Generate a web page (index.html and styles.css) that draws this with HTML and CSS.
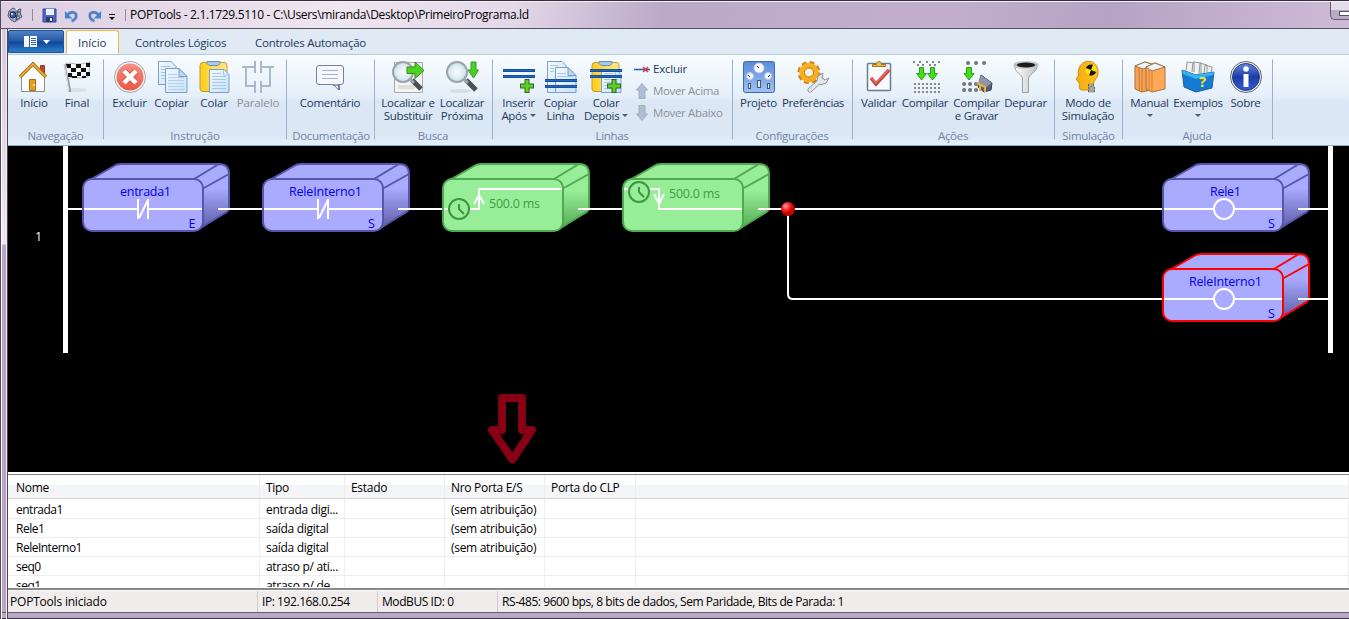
FILE: index.html
```html
<!DOCTYPE html>
<html lang="pt-BR">
<head>
<meta charset="utf-8">
<title>POPTools</title>
<link rel="stylesheet" href="styles.css">
</head>
<body>
<div class="window">
  <header class="titlebar">
    <svg class="app-icon" viewBox="0 0 18 18"><circle cx="9" cy="9" r="6.500" fill="#8790ad"/><path d="M3 5 7 2l3 2 5-1-1 4 2 4-5 2-2 3-4-2-3-4z" fill="#a9b0c6" stroke="#555d78"/><path d="M4 6h10M5 10h9M12 4l-2 10" stroke="#3b4568"/><circle cx="7" cy="9" r="3" fill="#3f5fae" stroke="#142449"/><circle cx="6" cy="8" r="1" fill="#fff"/><path d="M9 4l2-2 1 2z" fill="#fff"/></svg>
    <span class="title-sep"></span>
    <svg class="save" viewBox="0 0 16 16"><path d="M1 1h13v13H1z" fill="#5466c5" stroke="#3242a3"/><path d="M4 1h8v6H4z" fill="#e7f3ff"/><path d="M4 9h7v5H4z" fill="#293d61"/><path d="M8 10h2v3H8z" fill="#dce9f6"/></svg>
    <svg class="undo" viewBox="0 0 16 16"><path d="M4 6c3-4 9-3 9 1 0 3-2 5-5 6" fill="none" stroke="#4f84cb" stroke-width="3"/><path d="M1 2v8h8z" fill="#4584d1"/></svg>
    <svg class="redo" viewBox="0 0 16 16"><path d="M12 6C9 2 3 3 3 7c0 3 2 5 5 6" fill="none" stroke="#4f84cb" stroke-width="3"/><path d="M15 2v8H7z" fill="#4584d1"/></svg>
    <svg class="customize" viewBox="0 0 8 8"><path d="M1 .5h6" stroke="#111"/><path d="M1 3h6L4 6z" fill="#111"/></svg>
    <span class="title-sep second"></span>
    <span class="title">POPTools - 2.1.1729.5110 - C:\Users\miranda\Desktop\PrimeiroPrograma.ld</span>
    <span class="minimize"><i></i></span>
  </header>
  <nav class="tabs">
    <div class="file-tab"><svg viewBox="0 0 28 14"><path d="M1 1h13v11H1z" fill="#f8fbff"/><path d="M6.500 1v11" stroke="#315ea7"/><path d="M8 3.500h5M8 5.500h5M8 7.500h5M8 9.500h5" stroke="#315ea7"/><path d="M20 5h7l-3.500 4z" fill="#fff"/></svg></div>
    <div class="tab active">Início</div>
    <div class="tab logic">Controles Lógicos</div>
    <div class="tab automation">Controles Automação</div>
  </nav>
  <section class="ribbon">
    <div class="group nav"><div class="tools">
      <div class="tool w40"><svg viewBox="0 0 32 32"><path d="M22.500 4.500h4v9h-4z" fill="#c94529" stroke="#8d3b2b"/><path d="M3.500 15 15 4l11.500 11v15.500h-23z" fill="#fbfcfd" stroke="#8a9098"/><path d="M2 16 15 3l13 13" fill="none" stroke="#a9701a" stroke-width="3.500"/><path d="M2 16 15 3l13 13" fill="none" stroke="#f2b631" stroke-width="1.500"/><path d="M11.500 18.500h6v11h-6z" fill="#e6a319" stroke="#ac6c12"/><circle cx="16" cy="24" r="1" fill="#fff"/></svg><span>Início</span></div>
      <div class="tool w46"><svg viewBox="0 0 32 32"><ellipse cx="16" cy="29" rx="10" ry="2" fill="#c9cfd6" opacity=".5"/><path d="M4 3 9 31" stroke="#8c949c" stroke-width="2.500"/><path d="M3.500 3 8 30" stroke="#e6eaee"/><path d="M4 3c7-3 9 3 25-2l-1 14c-8 5-15-2-21 3z" fill="#f7f7f7" stroke="#777" stroke-width=".5"/><path d="M5 3h5v4H6zm10 0h5v4h-5zm10-1h4v4h-4zM10 7h5v4h-5zm10 0h5v4h-5zM7 12h4v4H7zm9-1h4v4h-4zm9 0h4v4h-4zm-14 4h5v2h-5zm10 0h4v2h-4z" fill="#111"/></svg><span>Final</span></div>
    </div><div class="caption">Navegação</div></div>

    <div class="group instruction"><div class="tools">
      <div class="tool w41"><svg viewBox="0 0 32 32"><circle cx="16" cy="16" r="15.500" fill="#f7f8f9" stroke="#a2a5a8"/><circle cx="16" cy="16" r="13.500" fill="url(#red)"/><path d="m10 10 12 12M22 10 10 22" stroke="#d45a4b" stroke-width="6.500"/><path d="m10 10 12 12M22 10 10 22" stroke="#fff" stroke-width="4.500"/></svg><span>Excluir</span></div>
      <div class="tool w43"><svg viewBox="0 0 32 32"><path d="M2.500.5H15l5 5v18H2.500z" fill="url(#paper)" stroke="#7c9fc8"/><path d="M5 5.500h9M5 8.500h5M5 11.500h4M5 14.500h4M5 17.500h4" stroke="#a9c8e7"/><path d="M9.500 7.500H23l8 8v16H9.500z" fill="url(#paper)" stroke="#7c9fc8"/><path d="M23 7.500v8h8z" fill="#bdd9f5" stroke="#7c9fc8"/><path d="M12 13.500h9M12 16.500h16M12 19.500h16M12 22.500h16M12 25.500h16M12 28.500h16" stroke="#b5d0ec"/></svg><span>Copiar</span></div>
      <div class="tool w42"><svg viewBox="0 0 32 32"><g id="clipboard"><rect x="2" y="1.500" width="27" height="29" rx="3" fill="url(#yellow)" stroke="#be9b32"/><path d="M9 .5h13v2l-2 2h-9l-2-2z" fill="#a9c9e9" stroke="#6c8fb5"/><path d="M11.500 8.500H26l5 5v18H11.500z" fill="url(#paper)" stroke="#7c9fc8"/><path d="M25.500 9v5H31M14 12.500h9M14 15.500h14M14 18.500h14M14 21.500h14M14 24.500h14M14 27.500h14" fill="none" stroke="#a9c8e7"/></g></svg><span>Colar</span></div>
      <div class="tool w46 disabled"><svg viewBox="0 0 32 32"><path d="M0 6h13M19 6h13M13 0v12M19 0v12M4 7v18h9M28 7v18h-9M13 20v12M19 20v12" fill="none" stroke="#a9b9cb" stroke-width="2"/></svg><span>Paralelo</span></div>
    </div><div class="caption">Instrução</div></div>

    <div class="group documentation"><div class="tools"><div class="tool w80"><svg viewBox="0 0 32 32"><path d="M5 4.500h22q2.500 0 2.500 2.500v14q0 2.500-2.500 2.500h-2V29l-6-5.500H5q-2.500 0-2.500-2.500V7q0-2.500 2.500-2.500z" fill="#f6f8fd" stroke="#7380a5"/><path d="M19 24h6v5" fill="none" stroke="#3f4a69"/><path d="M8 9.500h16M8 13.500h16M8 17.500h16" stroke="#a3b1cb"/></svg><span>Comentário</span></div></div><div class="caption">Documentação</div></div>

    <div class="group search"><div class="tools">
      <div class="tool w58"><svg viewBox="0 0 32 32"><path d="M2.500 1.500h28v30h-28z" fill="#f4f4f4" stroke="#aaa"/><path d="M6 24h17v4H6z" fill="#dedede"/><path d="m20 19 9 9" stroke="#4c4f52" stroke-width="5"/><path d="m17 17 5 5" stroke="#9ba5ad" stroke-width="3"/><circle cx="11" cy="11" r="10" fill="url(#glass)" stroke="#98a3aa" stroke-width="2"/><path d="M15 6h8V1l9 8.500-9 8v-5h-8z" fill="#4cd51e" stroke="#398822"/></svg><span>Localizar e<br>Substituir</span></div>
      <div class="tool w50"><svg viewBox="0 0 32 32"><ellipse cx="14" cy="30" rx="11" ry="2" fill="#b8c4cd" opacity=".4"/><path d="m20 19 10 10" stroke="#4c4f52" stroke-width="5"/><path d="m17 17 5 5" stroke="#9ba5ad" stroke-width="3"/><circle cx="11" cy="11" r="10" fill="url(#glass)" stroke="#98a3aa" stroke-width="2"/><path d="M25 1h5v8h2.500L27.500 17 22 9h3z" fill="#42d51b" stroke="#43953b"/></svg><span>Localizar<br>Próxima</span></div>
    </div><div class="caption">Busca</div></div>

    <div class="group lines"><div class="tools">
      <div class="tool w43"><svg viewBox="0 0 32 32"><path d="M0 9.500h32M0 15.500h32" stroke="#164e9c" stroke-width="3"/><path d="M0 9.500h32M0 15.500h32" stroke="#1f6ac4"/><g id="plus"><path d="M24 18v14M17 25h14" stroke="#2c6a25" stroke-width="5"/><path d="M24 19v12M18 25h12" stroke="#62cf23" stroke-width="3"/></g></svg><span>Inserir<br>Após <i class="drop"></i></span></div>
      <div class="tool w41"><svg viewBox="0 0 32 32"><path d="M2.500.5H17l4 4v27H2.500z" fill="url(#paper)" stroke="#7c9fc8"/><path d="M10.500 6.500H23l8 8v17H10.500z" fill="url(#paper)" stroke="#7c9fc8"/><path d="M23 6.500v8h8z" fill="#bdd9f5" stroke="#7c9fc8"/><path d="M5 4.500h8M5 7.500h4M5 10.500h4M12 12.500h9M12 15.500h16" stroke="#abc9e8"/><path d="M0 19.500h32M0 25.500h32" stroke="#164e9c" stroke-width="3"/><path d="M0 19.500h32M0 25.500h32" stroke="#1f6ac4"/></svg><span>Copiar<br>Linha</span></div>
      <div class="tool w50"><svg viewBox="0 0 32 32"><use href="#clipboard"/><path d="M0 9.500h32M0 15.500h32" stroke="#164e9c" stroke-width="3"/><path d="M0 9.500h32M0 15.500h32" stroke="#1f6ac4"/><use href="#plus"/></svg><span>Colar<br>Depois <i class="drop"></i></span></div>
      <div class="line-actions">
        <div><svg viewBox="0 0 16 16"><path d="M0 8.500h16" stroke="#1b5fa9" stroke-width="1.500"/><path d="m9 6 5 5M14 6 9 11" stroke="#df333e" stroke-width="1.500"/></svg><span>Excluir</span></div>
        <div class="disabled"><svg viewBox="0 0 16 16"><path d="m8 .5 5.500 6.500H11v8.500H5V7H2.500z" fill="#b0bed5" stroke="#9facc2"/></svg><span>Mover Acima</span></div>
        <div class="disabled"><svg viewBox="0 0 16 16"><path d="m8 15.500 5.500-6.500H11V.5H5V9H2.500z" fill="#b0bed5" stroke="#9facc2"/></svg><span>Mover Abaixo</span></div>
      </div>
    </div><div class="caption">Linhas</div></div>

    <div class="group config"><div class="tools">
      <div class="tool w43"><svg viewBox="0 0 32 32"><rect x=".5" y=".5" width="31" height="31" rx="2" fill="url(#project)" stroke="#3f69ae"/><g fill="#f5f7fa" stroke="#bccbe0"><circle cx="16" cy="7" r="5"/><circle cx="7" cy="15" r="3.500"/><circle cx="25" cy="15" r="3.500"/></g><path d="m14 5 2 2M5 14l2 2M27 14l-2 2" stroke="#444"/><g fill="#dbe3e9" stroke="#46586a"><rect x="5.500" y="22.500" width="2" height="5"/><rect x="14.500" y="19.500" width="3" height="7"/><rect x="24.500" y="22.500" width="2" height="5"/></g></svg><span>Projeto</span></div>
      <div class="tool w66"><svg viewBox="0 0 32 32"><circle cx="12" cy="11.500" r="9.500" fill="none" stroke="#d07f12" stroke-width="4" stroke-dasharray="4.500 3"/><circle cx="12" cy="11.500" r="7" fill="none" stroke="#f6b01f" stroke-width="5.500"/><circle cx="12" cy="11.500" r="4.500" fill="#f4f2e4" stroke="#c4740b"/><path d="M13 29 24 19" stroke="#899097" stroke-width="5" stroke-linecap="round"/><path d="m20 20 1-5 5-3-1 5 3 2 4-2-3 5-6 2z" fill="#e4e7e7" stroke="#899097"/><path d="M13 29 24 19" stroke="#e4e7e7" stroke-width="3.500" stroke-linecap="round"/></svg><span>Preferências</span></div>
    </div><div class="caption">Configurações</div></div>

    <div class="group actions"><div class="tools">
      <div class="tool w43"><svg viewBox="0 0 32 32"><rect x="4.500" y="2.500" width="23" height="27" rx="1" fill="#fafbff" stroke="#687c9a" stroke-width="1.500"/><path d="M9.500 5.500v-2h4c0-4 5-4 5 0h4v2z" fill="#edbd4b" stroke="#a57419"/><path d="m8 17 5 6L26 9" fill="none" stroke="#c24739" stroke-width="3.500"/><path d="m8 16.500 5 5.500L26 8.500" fill="none" stroke="#ef6558" stroke-width="1.500"/></svg><span>Validar</span></div>
      <div class="tool w50"><svg viewBox="0 0 32 32"><path d="M4 0h2v2H4zm6 0h2v2h-2zm7 0h2v2h-2zm6 0h2v2h-2zm6 0h2v2h-2zM8 3h2v2H8zm5 0h2v2h-2zm7 0h2v2h-2zm5 0h2v2h-2z" fill="#888"/><path d="M10.500 6.500h4v6h3L12.500 19l-5-6.500h3zM21.500 6.500h4v6h3l-5 6.500-5-6.500h3z" fill="#3ce218" stroke="#399a22"/><path d="M5 23h27M5 27h27M5 31h27" stroke="#888" stroke-width="2" stroke-dasharray="2 2"/></svg><span>Compilar</span></div>
      <div class="tool w53"><svg viewBox="0 0 32 32"><path d="M7 2h.1M15 2h.1M23 2h.1M3 23h.1M9 23h.1M15 23h.1M3 29h.1M9 29h.1M15 29h.1" stroke="#777" stroke-width="4" stroke-linecap="round"/><path d="M5.500 6.500h5v6h2.500L8 19l-5-6.500h2.500z" fill="#3ce218" stroke="#399a22"/><path d="m20 14 11 8-1 7-7 2-6-5z" fill="#596173" stroke="#333c4d"/><path d="m20 14 11 8-6 4-8-3z" fill="#8e95ac"/><path d="m16 22 8 4v5m-5-7v6" fill="none" stroke="#e7b637" stroke-width="2"/></svg><span>Compilar<br>e Gravar</span></div>
      <div class="tool w45"><svg viewBox="0 0 32 32"><path d="M4.500 4c0 8 8 9 8 14v13.500h6V18c0-5 9-7 9-14z" fill="url(#silver)" stroke="#9a9fa2"/><ellipse cx="16" cy="4" rx="12" ry="3" fill="#aaa" stroke="#c6c8c9" stroke-width="1.500"/><ellipse cx="16" cy="4" rx="9" ry="2.500" fill="#1b1c1e"/></svg><span>Depurar</span></div>
    </div><div class="caption">Ações</div></div>

    <div class="group simulation"><div class="tools"><div class="tool w62"><svg viewBox="0 0 32 32"><path d="M6 12C7-4 26-3 26 11c0 7-4 7-5 13q-2 4-5 5h-6c-4 0-2-5-3-7l-3-4 3-4z" fill="url(#head)" stroke="#d09213"/><circle cx="19" cy="9" r="5.500" fill="#ffe000"/><path d="M19 9V3.500A5.500 5.500 0 0 0 13.500 9zm0 0v5.500a5.500 5.500 0 0 0 5.500-5.500z" fill="#121212" transform="rotate(20 19 9)"/><path d="M16 24h6M16 27h7M16 30h7" stroke="#666" stroke-width="2.500"/><path d="M17 24h4M17 27h5M17 30h5" stroke="#ddd"/></svg><span>Modo de<br>Simulação</span></div></div><div class="caption">Simulação</div></div>

    <div class="group help"><div class="tools">
      <div class="tool w45"><svg viewBox="0 0 32 32"><path d="m1 5 10-4 10 3v24L8 31l-7-3z" fill="#f5a252" stroke="#b26d35"/><path d="m1 5 10-4 10 3-12 4z" fill="#eff5f5" stroke="#97764f"/><path d="m12 6 9-4 10 4v22l-13 3-6-3z" fill="#ffa957" stroke="#b26d35"/><path d="m12 6 9-4 10 4-13 4z" fill="#eff5f5" stroke="#97764f"/><path d="m5 7 .5 22M8 9v21M15 9v21M18 10v20" stroke="#cd7b39"/></svg><span>Manual<br><i class="drop"></i></span></div>
      <div class="tool w52"><svg viewBox="0 0 32 32"><path d="m4 10 1-9 7 1v9M10 11l1-10 8 1v11M17 13l1-11 7 2v9M22 13l1-9 7 2-1 7" fill="#eff0ef" stroke="#929a9d"/><path d="m0 9 14 5 18-3-2 16-16 4L2 26z" fill="#147bd3" stroke="#235f98"/><path d="m0 9 14 5 18-3-1 3-17 4L1 13z" fill="#38b2f4"/><text x="17" y="26" class="question">?</text></svg><span>Exemplos<br><i class="drop"></i></span></div>
      <div class="tool w43"><svg viewBox="0 0 32 32"><circle cx="16" cy="16" r="15.500" fill="#f0f1f3" stroke="#62656b"/><circle cx="16" cy="16" r="13.500" fill="url(#info)" stroke="#23398b"/><circle cx="16" cy="8" r="2.800" fill="#fff"/><path d="M13.500 13h5v13h-5z" fill="#fff"/></svg><span>Sobre</span></div>
    </div><div class="caption">Ajuda</div></div>
  </section>

  <main class="canvas">
    <svg class="ladder" viewBox="8 146 1341 326">
      <defs>
        <linearGradient id="red" x2="0" y2="1"><stop stop-color="#f49183"/><stop offset="1" stop-color="#ed5544"/></linearGradient>
        <linearGradient id="paper" x2="1" y2="1"><stop stop-color="#f4faff"/><stop offset="1" stop-color="#c7e0fa"/></linearGradient>
        <linearGradient id="yellow"><stop stop-color="#ffce19"/><stop offset="1" stop-color="#ffe58b"/></linearGradient>
        <linearGradient id="silver"><stop stop-color="#fff"/><stop offset="1" stop-color="#bcc2c8"/></linearGradient>
        <radialGradient id="glass"><stop stop-color="#f9fdff"/><stop offset="1" stop-color="#cfe2ea"/></radialGradient>
        <linearGradient id="project" x2="0" y2="1"><stop stop-color="#5b8bd8"/><stop offset="1" stop-color="#9fc2f6"/></linearGradient>
        <linearGradient id="head"><stop stop-color="#f3a914"/><stop offset="1" stop-color="#ffc51b"/></linearGradient>
        <linearGradient id="info" x2="0" y2="1"><stop stop-color="#6688db"/><stop offset=".5" stop-color="#1c3da6"/><stop offset="1" stop-color="#315ed0"/></linearGradient>
        <linearGradient id="violet-side" x2="0" y2="1"><stop stop-color="#aaaaff"/><stop offset=".25" stop-color="#aaaaff"/><stop offset="1" stop-color="#5959a4"/></linearGradient>
        <linearGradient id="green-side" x2="0" y2="1"><stop stop-color="#98ee98"/><stop offset=".3" stop-color="#98ee98"/><stop offset="1" stop-color="#50a850"/></linearGradient>
        <radialGradient id="node" cx=".35" cy=".3"><stop stop-color="#ff9a9a"/><stop offset=".6" stop-color="#ee2222"/><stop offset="1" stop-color="#c80000"/></radialGradient>
        <g id="block">
          <path class="face" d="M87 182 114 166q3-2 7-2h98q10 0 10 10l-26 15-8-10H91z"/>
          <path class="side" d="M203 188 229 174v33q0 4-4 6l-26 17z"/>
          <path class="edge" d="M88 181 114 166q3-2 7-2h98q10 0 10 10v33q0 4-4 6l-28 17M194 179l25-15M203 188.500l26-14.500"/>
          <rect class="face edge" x="83" y="179" width="120" height="52" rx="9"/>
        </g>
      </defs>
      <path class="rail" d="M65.500 146v207M1330.500 146v207"/>
      <path class="wire" d="M68 209h1260M788 209v85q0 5 5 5h535"/>
      <use href="#block" class="violet"/>
      <use href="#block" class="violet" x="180"/>
      <use href="#block" class="green" x="360"/>
      <use href="#block" class="green" x="540"/>
      <use href="#block" class="violet" x="1080"/>
      <use href="#block" class="violet selected" x="1080" y="90"/>
      <g class="wire">
        <path d="M84 209h54M148 209h54M138 199v20M148 199v20M139 218l9-18M218 209h44"/>
        <path d="M264 209h54M328 209h54M318 199v20M328 199v20M319 218l9-18M398 209h44"/>
        <path d="M444 209h4M470 209h9v-20h83M474 204l5-9 5 9M578 209h44"/>
        <path d="M624 189h4M650 189h9v20h83M654 194l5 10 5-10M758 209h25"/>
        <path d="M1164 209h49M1235 209h47M1298 209h30M1164 299h49M1235 299h47M1298 299h30"/>
        <circle cx="1224" cy="209" r="10"/><circle cx="1224" cy="299" r="10"/>
      </g>
      <circle cx="788" cy="209" r="7" fill="url(#node)"/>
      <g class="clock"><circle cx="459" cy="209" r="10"/><path d="M459 204v5l5 5"/><circle cx="639" cy="192" r="10"/><path d="M639 187v5l5 5"/></g>
      <g class="blue-text"><text x="120" y="196" textLength="51">entrada1</text><text x="289" y="196" textLength="73">ReleInterno1</text><text x="1210" y="196" textLength="31">Rele1</text><text x="1189" y="286" textLength="73">ReleInterno1</text><text x="188.500" y="228">E</text><text x="368" y="228">S</text><text x="1268" y="228">S</text><text x="1268" y="318">S</text></g>
      <g class="green-text"><text x="489" y="208" textLength="51">500.0 ms</text><text x="669" y="198" textLength="51">500.0 ms</text></g>
      <text x="35" y="241" class="rung">1</text>
      <path d="M502 398h20v32h10l-19.500 29.500L492 430h10z" fill="none" stroke="#880015" stroke-width="8" stroke-linejoin="round"/>
    </svg>
  </main>

  <section class="table">
    <div class="row head"><span>Nome</span><span>Tipo</span><span>Estado</span><span>Nro Porta E/S</span><span>Porta do CLP</span><span></span></div>
    <div class="rows">
      <div class="row"><span class="name">entrada1</span><span>entrada digi...</span><span></span><span>(sem atribuição)</span><span></span><span></span></div>
      <div class="row"><span class="name">Rele1</span><span>saída digital</span><span></span><span>(sem atribuição)</span><span></span><span></span></div>
      <div class="row"><span class="name">ReleInterno1</span><span>saída digital</span><span></span><span>(sem atribuição)</span><span></span><span></span></div>
      <div class="row"><span class="name">seq0</span><span>atraso p/ ati...</span><span></span><span></span><span></span><span></span></div>
      <div class="row"><span class="name">seq1</span><span>atraso p/ de...</span><span></span><span></span><span></span><span></span></div>
    </div>
  </section>
  <footer class="status"><span>POPTools iniciado</span><span>IP: 192.168.0.254</span><span>ModBUS ID: 0</span><span>RS-485: 9600 bps, 8 bits de dados, Sem Paridade, Bits de Parada: 1</span></footer>
</div>
</body>
</html>
```
FILE: styles.css
```css
* { box-sizing: border-box; }
html, body { margin: 0; width: 100%; height: 619px; overflow: hidden; }
body { font: 11.5px/14px "Open Sans", "Noto Sans", sans-serif; color: #000; }
svg { display: block; overflow: visible; flex: none; }
.window { height: 619px; padding: 0 0 7px 8px; border-top: 1px solid #382d3c; display: grid; grid-template-rows: 28px 25px 92px 326px 118px 22px; background: linear-gradient(to right, #574a5d 0 1px, #fff 1px 2px, transparent 2px 6px, #eee4f4 6px 7px, #4c4650 7px 8px, transparent 8px), linear-gradient(#d5c6dc, #eee8f2 243px, #bba6c7 244px 611px, #645c69 611px 612px, #baa8c8 612px 617px, #403743 617px); }
.titlebar { margin-left: -7px; padding-left: 7px; display: flex; align-items: center; background: linear-gradient(100deg, #ddcee2, #eee6f0 25%, #e3d8e8 38%, #bba9c8 49%, #c1afcd 70%, #b5a3c3 82%, #cebbd8); border-top: 1px solid #f3eef6; border-bottom: 1px solid #57505f; }
.app-icon { width: 18px; height: 18px; margin-left: -2px; }
.title-sep { width: 1px; height: 12px; background: #948b9a; margin: 0 9px 0 8px; }
.save { width: 16px; height: 16px; margin-top: 2px; }
.undo, .redo { width: 15px; height: 15px; margin-left: 6px; margin-top: 3px; }
.redo { margin-left: 8px; }
.customize { width: 8px; height: 8px; margin-left: 6px; margin-top: 6px; }
.title-sep.second { margin: 0 4px 0 9px; }
.title { white-space: nowrap; font-size: 12px; letter-spacing: -.33px; }
.minimize { align-self: flex-start; margin-left: auto; width: 19px; height: 18px; padding: 9px 0 0 8px; border: 1px solid #665b6d; border-top: 0; border-right: 0; border-radius: 0 0 0 5px; background: linear-gradient(#e6dbea 0 8px, #b9abc3 8px); }
.minimize i { display: block; width: 12px; height: 5px; border: 1px solid #57505f; background: #fff; }
.tabs { display: flex; background: #dfeaf5; color: #1e395b; align-items: flex-end; }
.file-tab { width: 56px; height: 23px; margin-bottom: 1px; padding: 4px 0 0 14px; background: linear-gradient(#5081c2, #2359a9 48%, #104596 52%, #297fc8); border: 1px solid #225298; border-radius: 2px 2px 0 0; }
.file-tab svg { width: 28px; height: 14px; }
.tab { height: 22px; padding-top: 4px; white-space: nowrap; letter-spacing: -.2px; }
.tab.automation { letter-spacing: -.26px; }
.tab.active { width: 53px; height: 24px; margin-left: 2px; padding: 5px 0 0 11px; border: 1px solid #efb643; border-bottom-color: #f8fcff; border-radius: 3px 3px 0 0; background: #f8fbfe; letter-spacing: 0; }
.tab.logic { width: 120px; margin-left: 16px; }
.ribbon { display: flex; border-top: 1px solid #b5c8df; border-bottom: 1px solid #93aebd; background: linear-gradient(#f7fcff, #e6f0fa 45%, #dce7f5 52%, #dce7f5 88%, #e3eefa); color: #1e395b; }
.group { height: 90px; display: flex; flex-direction: column; border-right: 1px solid transparent; border-image: linear-gradient(transparent 5px, #9db1ca 6px 83px, transparent 84px) 1; }
.nav { width: 96px; padding-left: 6px; } .instruction { width: 183px; padding-left: 5px; } .documentation { width: 88px; padding-left: 3px; } .search { width: 118px; padding-left: 4px; } .lines { width: 240px; padding-left: 4px; } .config { width: 120px; padding-left: 4px; } .actions { width: 202px; padding-left: 4px; } .simulation { width: 68px; padding-left: 2px; } .help { width: 150px; padding-left: 4px; }
.tools { display: flex; height: 74px; padding-top: 6px; }
.tool { display: flex; flex-direction: column; align-items: center; text-align: center; white-space: nowrap; line-height: 13px; letter-spacing: -.3px; }
.tool > svg { width: 32px; height: 32px; margin-bottom: 3px; }
.nav .tool, .instruction .tool { letter-spacing: -.15px; }
.tool.w66 { letter-spacing: -.42px; }
.caption { margin-left: -5px; text-align: center; color: #73839e; line-height: 14px; letter-spacing: -.3px; }
.nav .caption { margin-left: -6px; }
.instruction .caption { letter-spacing: -.1px; }
.documentation .caption, .simulation .caption { margin-left: -2px; }
.disabled { color: #8c9098; }
.w40 { width: 40px; } .w41 { width: 41px; } .w42 { width: 42px; } .w43 { width: 43px; } .w45 { width: 45px; } .w46 { width: 46px; } .w50 { width: 50px; } .w52 { width: 52px; } .w53 { width: 53px; } .w58 { width: 58px; } .w62 { width: 62px; } .w66 { width: 66px; } .w80 { width: 80px; }
.drop { display: inline-block; border: solid transparent; border-width: 3px 3px 0; border-top-color: #465d79; vertical-align: 3px; }
.line-actions { padding-left: 3px; margin-top: -2px; letter-spacing: -.35px; }
.line-actions div { display: flex; height: 22px; align-items: center; gap: 3px; white-space: nowrap; margin-top: -1px; margin-bottom: 1px; }
.line-actions div:first-child { letter-spacing: -.2px; }
.line-actions svg { width: 16px; height: 16px; }
.question { fill: #ffe419; font: bold 15px "Open Sans", sans-serif; }
.canvas { background: #000; }
.ladder { width: 1341px; height: 326px; }
.rail { stroke: #fff; stroke-width: 5; }
.wire { stroke: #fff; stroke-width: 2; fill: none; }
.violet { --face: #aaaaff; --edge: #5656aa; --side: url(#violet-side); }
.green { --face: #98ee98; --edge: #50a850; --side: url(#green-side); }
.selected { --edge: #f00; }
.face { fill: var(--face); } .side { fill: var(--side); } .edge { stroke: var(--edge); stroke-width: 2; } path.edge { fill: none; }
.clock { fill: none; stroke: #409540; stroke-width: 2; }
.ladder text { font: 12.5px "Open Sans", "Noto Sans", sans-serif; }
.blue-text { fill: #0000f5; } .green-text { fill: #439c43; } .ladder .rung { fill: #fff; }
.table { overflow: hidden; background: #fff; border-bottom: 2px solid #858990; padding-top: 2px; }
.row { display: grid; grid-template-columns: 252px 85px 100px 100px 91px 1fr; height: 19px; border-bottom: 1px solid #eee; font-size: 12px; letter-spacing: -.3px; }
.row span { padding: 3px 0 0 6px; border-right: 1px solid #eee; white-space: nowrap; line-height: 14px; }
.row span:first-child { padding-left: 8px; }
.row .name { letter-spacing: -.5px; }
.row.head { height: 25px; border-top: 1px solid #7c828d; border-bottom-color: #d3d3d3; background: linear-gradient(#fff 10px, #f4f5f7 10px); }
.row.head span { padding-top: 6px; }
.rows { height: 88px; overflow: hidden; padding-top: 1px; }
.status { display: grid; grid-template-columns: 250px 120px 120px 1fr; background: #f0ecec; border-top: 1px solid #fff; font-size: 12px; letter-spacing: -.43px; white-space: nowrap; }
.status span { padding: 4px 0 0 4px; border-right: 1px solid #d0cccf; }
.status span:first-child { padding-left: 2px; letter-spacing: -.2px; }
.status span:last-child { border: 0; }
```
